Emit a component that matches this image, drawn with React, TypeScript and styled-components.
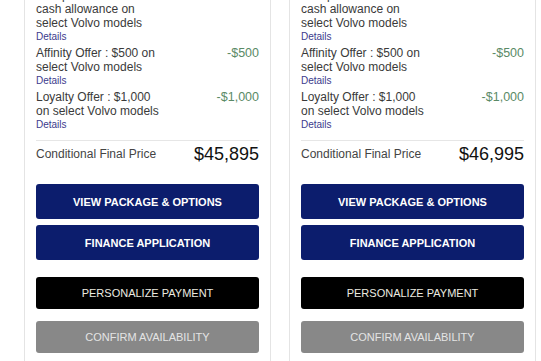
import styled, { createGlobalStyle } from 'styled-components'

type Offer = {
  label: string
  value: string
}

type VehicleCardProps = {
  offers: Offer[]
  finalPrice: string
}

const GlobalStyle = createGlobalStyle`
  html, body {
    margin: 0;
    padding: 0;
    background: #fff;
    overflow: hidden;
  }
  body {
    font-family: 'Liberation Sans', Arial, sans-serif;
    color: #3a3a3a;
  }
`

const Viewport = styled.div`
  width: 541px;
  height: 361px;
  overflow: hidden;
`

// the carousel is scrolled, so the tops of the cards sit above the window
const Track = styled.div`
  display: flex;
  gap: 18px;
  margin-top: -25px;
  padding-left: 24px;
`

const CardWrapper = styled.div`
  flex: 0 0 247px;
  box-sizing: border-box;
  border: 1px solid #e4e4e4;
  border-radius: 2px;
  padding: 12px 11px 24px;
  background: #fff;
`

const OfferList = styled.div`
  display: flex;
  flex-direction: column;
`

const OfferRow = styled.div`
  display: grid;
  grid-template-columns: 1fr 96px;
  margin-bottom: 3px;
`

const OfferText = styled.div`
  font-size: 12px;
  line-height: 14px;
  color: #3a3a3a;
`

const OfferValue = styled.div`
  font-size: 12.5px;
  line-height: 14px;
  color: #5a8a66;
  text-align: right;
`

const DetailsLink = styled.a`
  display: block;
  font-size: 10px;
  line-height: 13px;
  color: #3b3a8c;
  text-decoration: none;
`

const Divider = styled.hr`
  border: 0;
  border-top: 1px solid #e6e6e6;
  margin: 6px 0 0;
`

const PriceRow = styled.div`
  display: flex;
  justify-content: space-between;
  align-items: center;
  padding-top: 2px;
  height: 22px;
`

const PriceLabel = styled.span`
  font-size: 12px;
  color: #444;
`

const PriceValue = styled.span`
  font-size: 18px;
  color: #111;
`

const ButtonGroup = styled.div<{ $gap: number; $offset: number }>`
  display: flex;
  flex-direction: column;
  gap: ${({ $gap }) => $gap}px;
  margin-top: ${({ $offset }) => $offset}px;
`

const ActionButton = styled.button<{ $variant: 'navy' | 'black' | 'gray' }>`
  display: block;
  width: 100%;
  margin: 0;
  border: 0;
  border-radius: 3px;
  font-family: 'Liberation Sans', Arial, sans-serif;
  font-size: 11px;
  cursor: pointer;
  height: ${({ $variant }) => ($variant === 'navy' ? '35px' : '32px')};
  font-weight: ${({ $variant }) => ($variant === 'navy' ? 700 : 400)};
  background: ${({ $variant }) =>
    $variant === 'navy' ? '#0c1d6d' : $variant === 'black' ? '#000' : '#888'};
  color: ${({ $variant }) =>
    $variant === 'navy' ? '#fff' : $variant === 'black' ? '#ecebe0' : '#e4e4e4'};
`

const VehicleCard = ({ offers, finalPrice }: VehicleCardProps) => {
  return (
    <CardWrapper>
      <OfferList>
        {offers.map((offer) => (
          <OfferRow key={offer.label}>
            <OfferText>
              {offer.label}
              <DetailsLink href="#">Details</DetailsLink>
            </OfferText>
            <OfferValue>{offer.value}</OfferValue>
          </OfferRow>
        ))}
      </OfferList>
      <Divider />
      <PriceRow>
        <PriceLabel>Conditional Final Price</PriceLabel>
        <PriceValue>{finalPrice}</PriceValue>
      </PriceRow>
      <ButtonGroup $gap={6} $offset={19}>
        <ActionButton $variant="navy">VIEW PACKAGE &amp; OPTIONS</ActionButton>
        <ActionButton $variant="navy">FINANCE APPLICATION</ActionButton>
      </ButtonGroup>
      <ButtonGroup $gap={12} $offset={17}>
        <ActionButton $variant="black">PERSONALIZE PAYMENT</ActionButton>
        <ActionButton $variant="gray">CONFIRM AVAILABILITY</ActionButton>
      </ButtonGroup>
    </CardWrapper>
  )
}

const offers: Offer[] = [
  {
    label: 'Conquest Offer : $500 cash allowance on select Volvo models',
    value: '-$500',
  },
  { label: 'Affinity Offer : $500 on select Volvo models', value: '-$500' },
  { label: 'Loyalty Offer : $1,000 on select Volvo models', value: '-$1,000' },
]

const App = () => {
  return (
    <>
      <GlobalStyle />
      <Viewport>
        <Track>
          <VehicleCard offers={offers} finalPrice="$45,895" />
          <VehicleCard offers={offers} finalPrice="$46,995" />
        </Track>
      </Viewport>
    </>
  )
}

export default App
